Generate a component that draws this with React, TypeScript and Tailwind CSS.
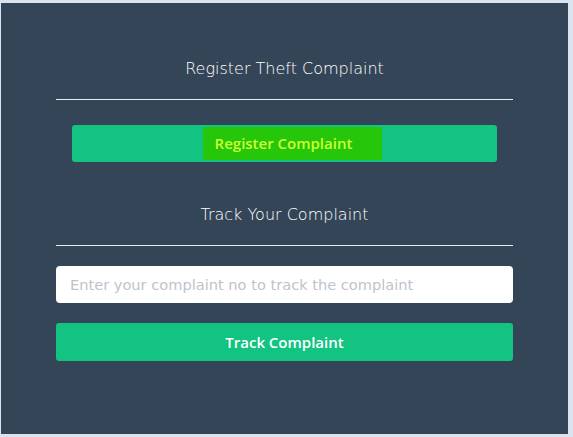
import React from "react";

const App = () => {
  return (
    <div className="h-[437px] w-[573px] bg-[#dbe4ee] pt-[3px] pb-[3px] pl-[1px] pr-[5px]">
      <div className="flex h-full flex-col items-center bg-[#344558] pt-[55px]">
        <div className="flex w-[457px] flex-col">
          <h2 className="text-center text-[16px] leading-[22px] font-extralight text-white [font-family:'DejaVu_Sans',sans-serif]">
            Register Theft Complaint
          </h2>
          <div className="mt-[19px] h-px bg-[#e6ecf2]" />
          <button className="mx-4 mt-[25px] flex h-[37px] items-center justify-center rounded-[3px] bg-[#12c381]">
            <span className="ml-[16px] rounded-[2px] bg-[#26c60a] py-[5px] pl-[12px] pr-[30px] text-[15px] font-semibold text-[#ccff33] [font-family:'Open_Sans',sans-serif]">
              Register Complaint
            </span>
          </button>
          <h2 className="mt-[42px] text-center text-[16px] leading-[22px] font-extralight text-white [font-family:'DejaVu_Sans',sans-serif]">
            Track Your Complaint
          </h2>
          <div className="mt-[19px] h-px bg-[#e6ecf2]" />
          <input
            className="mt-[20px] h-[37px] rounded-[4px] bg-white px-[14px] text-[14.6px] text-gray-700 outline-none placeholder:text-[#bfc3c9] [font-family:'DejaVu_Sans',sans-serif]"
            placeholder="Enter your complaint no to track the complaint"
          />
          <button className="mt-[20px] flex h-[38px] items-center justify-center rounded-[3px] bg-[#12c381] text-[15px] font-semibold text-white [font-family:'Open_Sans',sans-serif]">
            Track Complaint
          </button>
        </div>
      </div>
    </div>
  );
};

export default App;
